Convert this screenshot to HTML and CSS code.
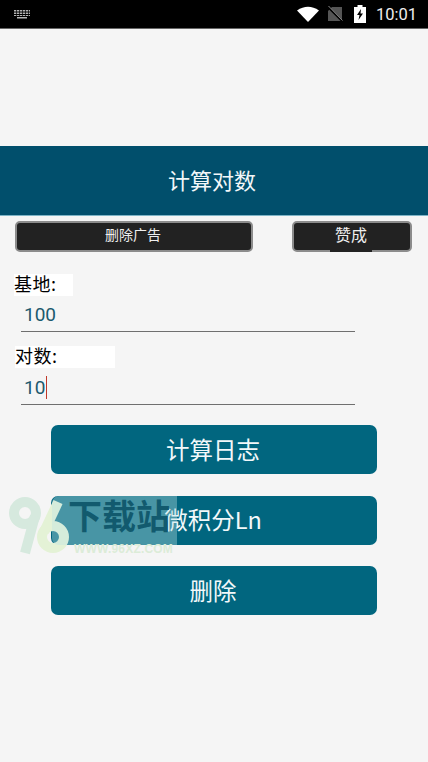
FILE: index.html
```html
<!DOCTYPE html>
<html lang="zh">
<head>
<meta charset="utf-8">
<title>计算对数</title>
<link rel="stylesheet" href="styles.css">
</head>
<body>
<div class="status">
  <svg class="kbd" width="18" height="10" viewBox="0 0 18 10"><path d="M1 1h16v1.500H1zM1 3.500h16V5H1zM1 6h16v1H1zM4 8h10v1.500H4z" fill="#b5b5b5"/><path d="M3.500 1v6M6.500 1v6M9.500 1v6M12.500 1v6M15.500 1v6" stroke="#000" stroke-width=".7"/></svg>
  <div class="status-right">
    <svg width="22" height="16" viewBox="0 0 22 16"><path d="M0 4.500Q11-3 22 4.500L11 16z" fill="#fff"/></svg>
    <svg width="16" height="16" viewBox="0 0 16 16"><path d="M5 1h10v14H1V5z" fill="#555"/><path d="M1 1l14 14" stroke="#000" stroke-width="2"/><path d="M1.500 0L15.500 14.500" stroke="#8a8a8a" stroke-width="1"/></svg>
    <svg class="batt" width="12" height="18" viewBox="0 0 12 18"><path d="M3.500 0h5v2H12v16H0V2h3.500z" fill="#fff"/><path d="M7 4L3 10h2.500L4.500 15 9 8.500H6.500z" fill="#000"/></svg>
    <span class="time">10:01</span>
  </div>
</div>
<div class="ad-space"></div>
<header class="title-bar">计算对数</header>
<div class="top-buttons">
  <div class="dark-btn wide">删除广告</div>
  <div class="dark-btn narrow">赞成</div>
</div>
<main class="form">
  <label class="label label-base">基地:</label>
  <div class="field">100</div>
  <label class="label label-log">对数:</label>
  <div class="field"><span>10</span><i class="caret"></i></div>
  <div class="actions">
    <div class="action">计算日志</div>
    <div class="action">微积分Ln</div>
    <div class="action">删除</div>
  </div>
</main>
<div class="watermark">
  <svg class="wm-logo" width="62" height="60" viewBox="0 0 62 60" fill="none">
    <circle cx="17" cy="17" r="11" stroke="#d6e9de" stroke-width="10"/>
    <path d="M27 20L17 57" stroke="#d6e9de" stroke-width="10"/>
    <circle cx="45" cy="41" r="11" stroke="#e4f2d6" stroke-width="10"/>
    <path d="M36 36L50 6" stroke="#e4f2d6" stroke-width="10"/>
  </svg>
  <div class="wm-veil"></div>
  <div class="wm-name">下载站</div>
  <div class="wm-url">WWW.96XZ.COM</div>
</div>
</body>
</html>
```
FILE: styles.css
```css
* { box-sizing: border-box; }
html, body { margin: 0; height: 100%; }
body {
  position: relative;
  width: 428px;
  height: 762px;
  overflow: hidden;
  background: #f5f5f5;
  font-family: "Noto Sans CJK SC", "Noto Sans", sans-serif;
}
.status {
  height: 29px;
  background: #000;
  border-bottom: 1px solid #666;
  display: flex;
  align-items: center;
  justify-content: space-between;
  padding: 0 11px 0 13px;
}
.status-right { display: flex; align-items: center; gap: 8px; }
.batt { margin-left: 3px; }
.time {
  color: #eee;
  font: 16.500px Roboto, sans-serif;
  margin-left: 2px;
}
.ad-space { height: 117px; }
.title-bar {
  height: 70px;
  background: #014f6c;
  border-bottom: 1px solid #7db4c6;
  color: #f2f7f9;
  font-size: 22px;
  display: flex;
  align-items: center;
  justify-content: center;
  padding: 0 4px 3px 0;
}
.top-buttons {
  display: flex;
  justify-content: space-between;
  padding: 5px 16px 0 15px;
}
.dark-btn {
  height: 31px;
  background: #222;
  border: 2px solid #8c8c8c;
  border-radius: 5px;
  color: #eee;
  font-size: 14px;
  display: flex;
  align-items: center;
  justify-content: center;
  padding: 0 2px 5px 0;
}
.wide { width: 238px; }
.narrow { width: 120px; position: relative; font-size: 16px; }
.narrow::after {
  content: "";
  position: absolute;
  left: 36px;
  bottom: -2px;
  width: 42px;
  height: 2px;
  background: #222;
}
.form { padding-top: 22px; }
.label {
  display: flex;
  align-items: center;
  height: 22px;
  background: #fff;
  color: #000;
  font-size: 18px;
  letter-spacing: .5px;
  padding-bottom: 5px;
}
.label-base { width: 59px; margin-left: 14px; }
.label-log { width: 100px; margin-left: 15px; margin-top: 14px; }
.field {
  width: 334px;
  height: 36px;
  margin-left: 21px;
  padding: 3px 0 0 3px;
  border-bottom: 1px solid #6f6f6f;
  color: #1c5a6e;
  font: 19px/28px Roboto, sans-serif;
  display: flex;
  align-items: center;
}
.label-log + .field { height: 37px; }
.caret {
  width: 1px;
  height: 23px;
  background: #c0392b;
  margin-left: 1px;
}
.actions {
  display: flex;
  flex-direction: column;
  gap: 21.500px;
  padding: 20px 0 0 51px;
}
.action {
  width: 326px;
  height: 49px;
  background: #01667f;
  border-radius: 7px;
  color: #f2f8fa;
  font-size: 23.500px;
  display: flex;
  align-items: center;
  justify-content: center;
  padding: 0 2px 2px 0;
}
.watermark {
  position: absolute;
  left: 5px;
  top: 496px;
  width: 173px;
  height: 62px;
  pointer-events: none;
}
.wm-logo { position: absolute; left: 3px; top: 0; }
.wm-veil {
  position: absolute;
  left: 47px;
  top: 0;
  width: 125px;
  height: 49px;
  background: rgba(190, 225, 230, .38);
  border-radius: 7px 0 0 7px;
}
.wm-name {
  position: absolute;
  left: 63px;
  top: -3px;
  color: #125a6e;
  font-size: 34px;
  line-height: 44px;
  font-weight: 700;
  white-space: nowrap;
}
.wm-url {
  position: absolute;
  left: 69px;
  top: 46px;
  color: #dcecd8;
  font: 700 12px/14px "Liberation Sans", sans-serif;
  letter-spacing: .2px;
}
```
